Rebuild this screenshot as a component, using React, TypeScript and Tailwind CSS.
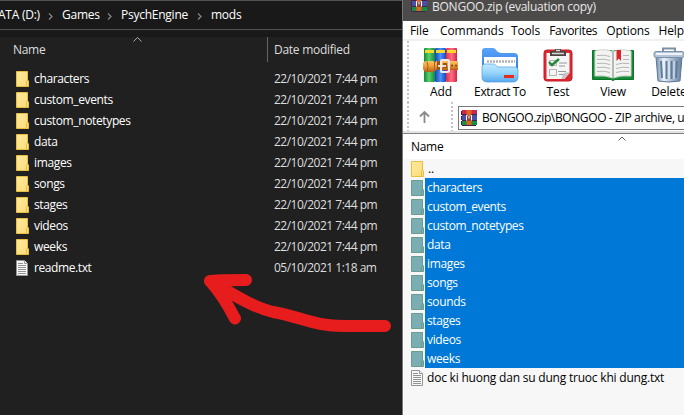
import React from "react";

const FONT = "font-['Open_Sans','Noto_Sans',sans-serif]";

function Folder({ selected = false, className = "" }: { selected?: boolean; className?: string }) {
  const edge = selected ? "#6d9c8d" : "#e9bf3d";
  return (
    <svg width="13" height="16" viewBox="0 0 13 16" className={"shrink-0 " + className}>
      <defs>
        <linearGradient id="folderFace" x1="0" y1="0" x2="1" y2="1">
          <stop offset="0" stopColor="#ffeaa0" />
          <stop offset="1" stopColor="#fddb78" />
        </linearGradient>
      </defs>
      <path d="M.5.5h11v8.5l1 1v5.5H.5z" fill={selected ? "#7badb5" : "url(#folderFace)"} stroke={edge} />
      <path d="M10.5 15.5v-5l1-1.5" fill="none" stroke={edge} />
    </svg>
  );
}

function TextFile({ className = "" }: { className?: string }) {
  return (
    <svg width="12" height="16" viewBox="0 0 12 16" className={"shrink-0 " + className}>
      <path d="M.5.5h8l3 3v12H.5z" fill="#f8f8f8" stroke="#949494" />
      <path d="M8.5.5v3h3" fill="#fff" stroke="#949494" />
      <path d="M2 3.5h5M2 5.5h8M2 7.5h8M2 9.5h8M2 11.5h8M2 13.5h8" stroke="#929292" />
    </svg>
  );
}

function RarMini({ className = "" }: { className?: string }) {
  return (
    <svg width="16" height="16" viewBox="0 0 16 16" className={"shrink-0 " + className}>
      <path d="M1 0h15v5H1z" fill="#c8284f" />
      <path d="M1 5h15v6H1z" fill="#4a4fae" />
      <path d="M1 11h15v4H1z" fill="#159040" />
      <path d="M0 1h1v4H0zM0 6h1v4H0zM0 11h1v4H0zM1 4h15v1H1zM1 10h15v1H1zM1 15h14v1H1z" fill="#43214a" />
      <path d="M5.5 0h5v15h-5z" fill="#e0641f" />
      <path d="M5 5h6v6H5z" fill="#963f2c" />
      <path d="M5.500 10.500v-5h1M10.500 10.500v-5h-1M8 5.500v3" stroke="#fff" strokeWidth="1" fill="none" />
    </svg>
  );
}

function AddIcon() {
  return (
    <svg width="36" height="36" viewBox="0 0 36 36">
      <defs>
        <linearGradient id="bookG"><stop stopColor="#118638" /><stop offset=".45" stopColor="#5bd06c" /><stop offset="1" stopColor="#138a3c" /></linearGradient>
        <linearGradient id="bookB"><stop stopColor="#1745b9" /><stop offset=".5" stopColor="#4a94f7" /><stop offset="1" stopColor="#1c47c0" /></linearGradient>
        <linearGradient id="bookR"><stop stopColor="#e22b4a" /><stop offset=".5" stopColor="#ff6f84" /><stop offset="1" stopColor="#d12545" /></linearGradient>
        <linearGradient id="belt" x2="0" y2="1"><stop stopColor="#f9c468" /><stop offset=".45" stopColor="#f0a23a" /><stop offset="1" stopColor="#b75c16" /></linearGradient>
      </defs>
      <rect x="1" y="1" width="11" height="34" rx="1" fill="url(#bookG)" />
      <rect x="12" y="1" width="11" height="34" rx="1" fill="url(#bookB)" />
      <rect x="23" y="1" width="11" height="34" rx="1" fill="url(#bookR)" />
      <path d="M2 3h9v3H2zM13 3h9v3h-9zM24 3h9v3h-9z" fill="#f9d92c" />
      <path d="M13 14h22v9H13z" fill="url(#belt)" />
      <path d="M0 16q1-2 4-2h5q4 0 4 2v7q-1 2-4 2H4q-3 0-4-3z" fill="url(#belt)" />
      <path d="M4 14.500q2 5 0 10M11.500 14v10" fill="none" stroke="#a9621b" />
      <path d="M14 14h3v9h-3zM20 16h4v5h-4z" fill="#9a5318" />
      <rect x="18" y="13" width="8" height="12" rx="1" fill="none" stroke="#ecebe8" strokeWidth="2" />
      <path d="M15 19h8" stroke="#f3eee4" strokeWidth="1.800" />
      <circle cx="29" cy="18.500" r="1" fill="#783b14" /><circle cx="33" cy="18.500" r="1" fill="#783b14" />
    </svg>
  );
}

function ExtractIcon() {
  return (
    <svg width="38" height="36" viewBox="0 0 38 36">
      <defs>
        <linearGradient id="extractBack" x2="0" y2="1"><stop stopColor="#5ba5f8" /><stop offset="1" stopColor="#1f6be0" /></linearGradient>
        <linearGradient id="extractFront" x2="0" y2="1"><stop stopColor="#c2ebff" /><stop offset=".5" stopColor="#93d4fb" /><stop offset="1" stopColor="#58a9ec" /></linearGradient>
      </defs>
      <path d="M1 31V4q0-3 3-3h8q2 0 3 2 2 3 5 3h13q4 0 4 4v21z" fill="url(#extractBack)" />
      <path d="M3 10h32v12H3z" fill="#fff" />
      <path d="M6 14.500h28" stroke="#aeb2b8" strokeWidth="2.500" strokeDasharray="2 1" />
      <path d="M1 20q0-3 3-3h8q2 0 3 1.500 1 1.500 3 1.500h16q3 0 3 3v7q0 5-5 5H6q-5 0-5-5z" fill="url(#extractFront)" stroke="#4a9be5" strokeWidth=".7" />
      <path d="M23 28h10v3H23z" fill="#e8291c" />
    </svg>
  );
}

function TestIcon() {
  return (
    <svg width="30" height="34" viewBox="0 0 30 34">
      <rect x="1" y="2" width="28" height="31" rx="3" fill="#dd2832" stroke="#c41c27" />
      <path d="M3.500 5h23v20l-5 6h-18z" fill="#f5f5f5" />
      <path d="m26.500 24-6 1-2 6h3z" fill="#c4c5c7" />
      <path d="M7 3h5V1h6v2h5v5H7z" fill="#4c4643" />
      <path d="M9 5.500h12M13 2.500h4" stroke="#dcd9d5" strokeWidth="1.300" />
      <path d="M6.500 12.500h7v5h-7zM6.500 21.500h7v6h-7z" fill="none" stroke="#b3b3b3" />
      <path d="m6 14 3 3 7-6" fill="none" stroke="#238a3c" strokeWidth="2.400" />
      <path d="M16 15h8M16 18h6M15 23.500h8M16 26.500h4" stroke="#95989c" />
    </svg>
  );
}

function ViewIcon() {
  return (
    <svg width="42" height="34" viewBox="0 0 42 34">
      <path d="M.5 2.500H19l2 1 2-1h18.500v29H23l-2 1-2-1H.5z" fill="#168b35" stroke="#0b742a" />
      <path d="M3 3q11-3 18 1 7-4 18-1v25q-11-1-18 2-7-3-18-2z" fill="#f3f3f1" stroke="#d0d5d0" />
      <path d="M21 4v26" stroke="#9caaa0" strokeWidth="1.500" />
      <path d="M5 7.500q8-1 13 1M5 11.500q8-1 13 1M5 15.500q8-1 13 1M5 19.500q8-1 13 1M5 23.500q8-1 13 1M24 16.500q6-2 13-1M24 20.500q6-2 13-1M24 24.500q6-2 13-1M31 7.500h6M31 11.500h6" fill="none" stroke="#b4b6b5" />
      <path d="M24.500 2h4.500v11l-2.200-2.500-2.300 2.500z" fill="#dc252b" />
    </svg>
  );
}

function DeleteIcon() {
  return (
    <svg width="32" height="36" viewBox="0 0 32 36">
      <defs><linearGradient id="canBody"><stop stopColor="#6f8cad" /><stop offset=".3" stopColor="#edf3fa" /><stop offset=".6" stopColor="#a9bbd0" /><stop offset="1" stopColor="#66819f" /></linearGradient></defs>
      <path d="M10 5V1.500h12V5" fill="none" stroke="#7d90a5" strokeWidth="2" />
      <path d="M3 10h26l-2 24q-11 2-22 0z" fill="url(#canBody)" stroke="#5d7998" />
      <path d="m8 14 1 17M13.500 14v18M18.500 14v18M24 14l-1 17" stroke="#5f7c9c" strokeWidth="2" />
      <path d="m10 14 1 17M16 14v18M21 14v18" stroke="#e7eff7" />
      <rect x="1" y="4.500" width="30" height="6" rx="2" fill="#b5c5d5" stroke="#7a91ab" />
      <path d="M3 7h26" stroke="#edf3f8" strokeWidth="2" />
    </svg>
  );
}

const leftRows = ["characters", "custom_events", "custom_notetypes", "data", "images", "songs", "stages", "videos", "weeks"];
const archiveRows = ["characters", "custom_events", "custom_notetypes", "data", "images", "songs", "sounds", "stages", "videos", "weeks"];

function Crumb({ label, width }: { label: string; width: string }) {
  return (
    <div className={"flex shrink-0 items-center " + width}>
      <svg width="5" height="7" viewBox="0 0 5 7" className="mr-[9px] mt-0.5 shrink-0"><path d="m1 .5 3 3-3 3" fill="none" stroke="#858585" strokeWidth="1.3" /></svg>
      <span>{label}</span>
    </div>
  );
}

function Explorer() {
  return (
    <section className="w-[402px] shrink-0 overflow-hidden bg-[#202020] text-white">
      <div className="flex h-[30px] items-center border-y border-[#535353] bg-[#191919] tracking-[-0.25px]">
        <span className="-ml-[2px] w-[50px] shrink-0 whitespace-nowrap">ATA (D:)</span>
        <Crumb label="Games" width="w-[59px]" />
        <Crumb label="PsychEngine" width="w-[90px]" />
        <Crumb label="mods" width="w-[60px]" />
      </div>
      <div className="h-[7px] bg-[#191919]" />
      <div className="flex h-[25px] text-[#dedede]">
        <div className="flex w-[268px] border-r border-[#636363] pl-[13px]">
          <span className="w-[120px] pt-1 tracking-[-0.3px]">Name</span>
          <svg width="9" height="5" viewBox="0 0 9 5"><path d="m.5 4.5 4-4 4 4" fill="none" stroke="#aaa" /></svg>
        </div>
        <span className="pl-[6px] pt-1 tracking-[-0.27px]">Date modified</span>
      </div>
      <div className="pt-1.5">
        {leftRows.map((name) => (
          <div key={name} className="flex h-[21px] items-center">
            <Folder className="ml-4" />
            <span className="ml-[5px] w-[240px] tracking-[-0.36px]">{name}</span>
            <span className="tracking-[-0.5px] text-[#dedede]">22/10/2021 7:44 pm</span>
          </div>
        ))}
        <div className="flex h-[21px] items-center">
          <TextFile className="ml-4" />
          <span className="ml-[6px] w-[240px] tracking-[-0.4px]">readme.txt</span>
          <span className="tracking-[-0.5px] text-[#dedede]">05/10/2021 1:18 am</span>
        </div>
      </div>
    </section>
  );
}

function Tool({ label, width, children }: { label: string; width: string; children: React.ReactNode }) {
  return (
    <div className={"flex shrink-0 flex-col items-center " + width}>
      <div className="flex h-9 items-center">{children}</div>
      <span className="whitespace-nowrap leading-[17px]">{label}</span>
    </div>
  );
}

function Grip() {
  return <div className="h-full w-[2px] shrink-0 bg-[repeating-linear-gradient(to_bottom,#c4c4c4_0_2px,transparent_2px_4px)]" />;
}

function Archive() {
  return (
    <section className="flex w-[282px] shrink-0 flex-col overflow-hidden border-l border-[#777] bg-white text-black">
      <div className="flex h-[21px] shrink-0 bg-[#4d4b4a] text-[#e8e8e8]">
        <RarMini className="-mt-1 ml-2" />
        <span className="-mt-[2px] ml-[5px] whitespace-nowrap tracking-[-0.24px]">BONGOO.zip (evaluation copy)</span>
      </div>
      <div className="flex h-[18px] shrink-0 items-center whitespace-nowrap pl-[7px]">
        <span className="w-[32px] pt-0.5">File</span>
        <span className="w-[76px] pt-0.5 tracking-[-0.05px]">Commands</span>
        <span className="w-[41px] pt-0.5">Tools</span>
        <span className="w-[61px] pt-0.5 tracking-[-0.3px]">Favorites</span>
        <span className="w-[56px] pt-0.5">Options</span>
        <span className="pt-0.5">Help</span>
      </div>
      <div className="h-[2px] shrink-0 bg-[#f0f0f0]" />
      <div className="flex h-[61px] shrink-0 pl-[4px]">
        <Grip />
        <div className="flex pt-[6px]">
          <Tool label="Add" width="ml-[4px] w-[56px]"><AddIcon /></Tool>
          <Tool label="Extract To" width="w-[62px] tracking-[-0.4px]"><ExtractIcon /></Tool>
          <Tool label="Test" width="w-[54px]"><TestIcon /></Tool>
          <Tool label="View" width="w-[56px]"><ViewIcon /></Tool>
          <Tool label="Delete" width="w-[56px]"><DeleteIcon /></Tool>
        </div>
      </div>
      <div className="flex h-[29px] shrink-0 pl-[4px]">
        <Grip />
        <svg width="11" height="12" viewBox="0 0 11 12" className="ml-[10px] mt-[9px] shrink-0"><path d="M5.5 12V1M1 5.5 5.5 1 10 5.500" fill="none" stroke="#8a8a8a" strokeWidth="1.8" /></svg>
        <div className="ml-[21px] h-full"><Grip /></div>
        <div className="ml-[5px] mt-[4px] flex h-[24px] w-[240px] shrink-0 items-center whitespace-nowrap border border-[#7a7a7a] pl-[2px]">
          <RarMini />
          <span className="ml-[5px] tracking-[-0.38px]">BONGOO.zip\BONGOO - ZIP archive, unpacked</span>
        </div>
      </div>
      <div className="h-[2px] shrink-0 bg-[#e3e3e3]" />
      <div className="flex h-[26px] shrink-0 border-t border-[#808080] pl-2">
        <span className="w-[207px] pt-1 tracking-[-0.3px]">Name</span>
        <svg width="8" height="6" viewBox="0 0 8 6" className="mt-0.5"><path d="m.5 4.5 3.5-3.5 3.5 3.5" fill="none" stroke="#646464" /></svg>
      </div>
      <div className="ml-[1px] grow bg-[#f7f7f7]">
        <div className="flex h-[19px] items-center pl-[7px]"><Folder /><span className="ml-1">..</span></div>
        {archiveRows.map((name) => (
          <div key={name} className="flex h-[19px] items-center pl-[7px]">
            <Folder selected />
            <span className="ml-[1px] flex h-[19px] grow items-center bg-[#0078d7] pl-[2px] tracking-[-0.36px] text-white">{name}</span>
          </div>
        ))}
        <div className="flex h-[19px] items-center whitespace-nowrap pl-[7px]"><TextFile /><span className="ml-1 tracking-[-0.21px]">doc ki huong dan su dung truoc khi dung.txt</span></div>
      </div>
    </section>
  );
}

export default function App() {
  return (
    <main className={"relative flex h-[415px] w-[684px] overflow-hidden text-[12px] leading-[18px] tracking-[-0.12px] " + FONT}>
      <Explorer />
      <Archive />
      <svg width="220" height="70" viewBox="200 265 220 70" className="pointer-events-none absolute left-[200px] top-[265px]">
        <path d="M385 326h-41c-31 0-42-9-71-14-18-4-39-17-63-31M246 280c-12 0-24 0-36 1 11 12 18 24 25 37.500" fill="none" stroke="#e71d1d" strokeWidth="12" strokeLinecap="round" strokeLinejoin="round" />
      </svg>
    </main>
  );
}
